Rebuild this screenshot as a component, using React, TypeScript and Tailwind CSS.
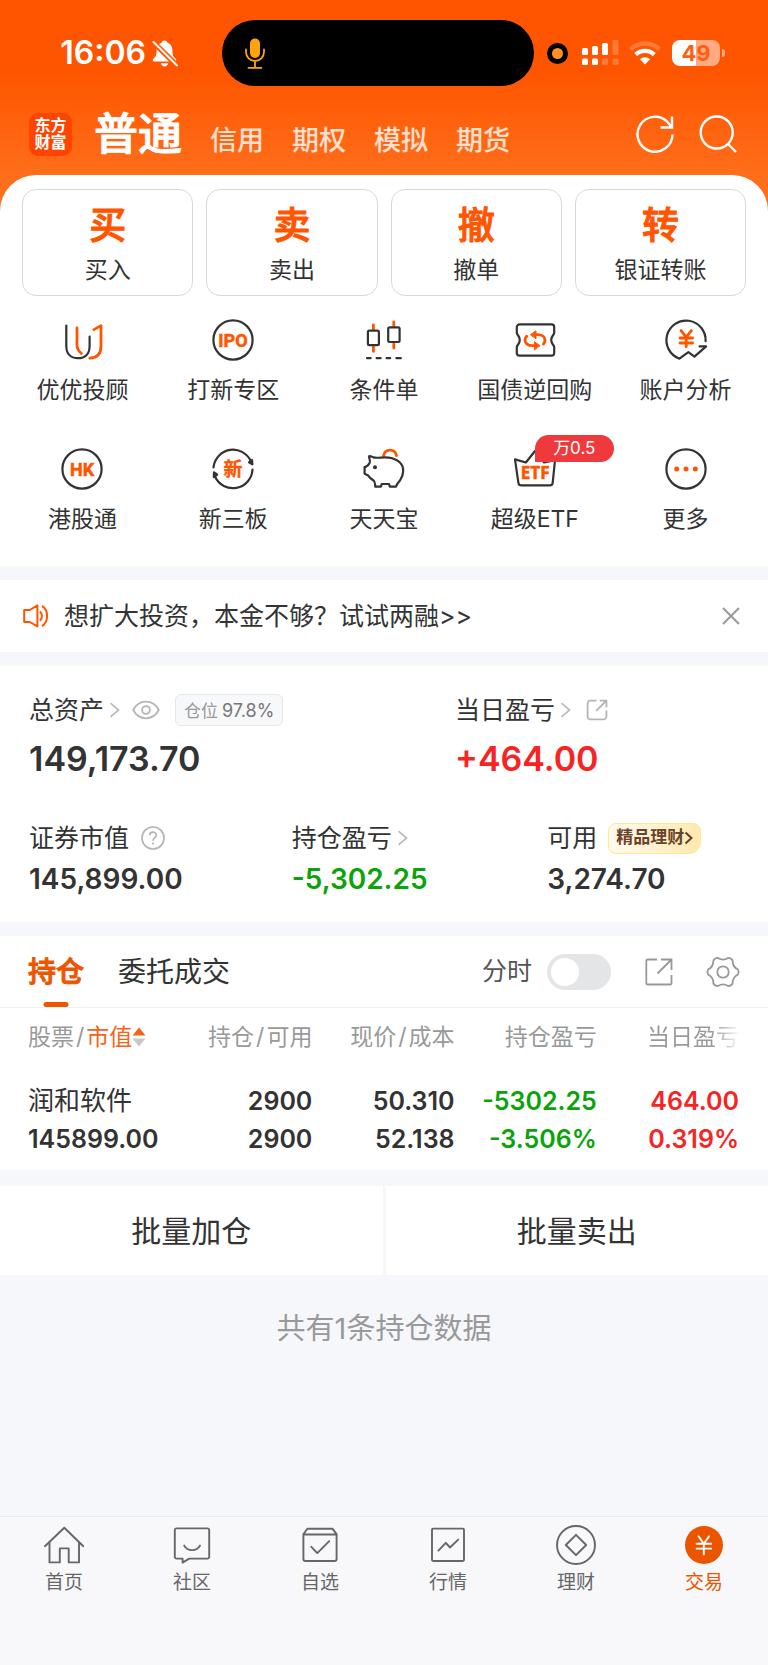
import type { ReactNode } from "react";

const accounts = ["信用", "期权", "模拟", "期货"];

const actions = [
  { mark: "买", label: "买入" },
  { mark: "卖", label: "卖出" },
  { mark: "撤", label: "撤单" },
  { mark: "转", label: "银证转账" },
];

const shortcuts = [
  { label: "优优投顾", icon: <AdvisorIcon /> },
  { label: "打新专区", icon: <RoundTextIcon text="IPO" /> },
  { label: "条件单", icon: <CandleIcon /> },
  { label: "国债逆回购", icon: <RepoIcon /> },
  { label: "账户分析", icon: <AnalysisIcon /> },
  { label: "港股通", icon: <RoundTextIcon text="HK" /> },
  { label: "新三板", icon: <NewBoardIcon /> },
  { label: "天天宝", icon: <PiggyIcon /> },
  { label: "超级ETF", icon: <EtfIcon />, badge: "万0.5" },
  { label: "更多", icon: <MoreIcon /> },
];

const holdings = [
  {
    name: "润和软件",
    value: "145899.00",
    cells: [
      { top: "2900", bottom: "2900", color: "text-[#333]" },
      { top: "50.310", bottom: "52.138", color: "text-[#333]" },
      { top: "-5302.25", bottom: "-3.506%", color: "text-[#0aa30a]" },
      { top: "464.00", bottom: "0.319%", color: "text-[#f72424]" },
    ],
  },
];

const tabs = [
  { label: "首页", icon: <HomeIcon /> },
  { label: "社区", icon: <CommunityIcon /> },
  { label: "自选", icon: <WatchlistIcon /> },
  { label: "行情", icon: <MarketIcon /> },
  { label: "理财", icon: <WealthIcon /> },
  { label: "交易", icon: <TradeIcon />, active: true },
];

/* ---------- shortcut icons ---------- */

function ShortcutSvg({ children }: { children: ReactNode }) {
  return (
    <svg
      viewBox="0 0 44 44"
      className="size-11"
      fill="none"
      stroke="#333"
      strokeWidth="2.2"
      strokeLinecap="round"
      strokeLinejoin="round"
      aria-hidden="true"
    >
      {children}
    </svg>
  );
}

function AdvisorIcon() {
  return (
    <ShortcutSvg>
      <path d="M6.3 7.5V28c0 8 4.5 12.2 11.6 12.2S29.6 36 29.6 28v-9.3" />
      <g stroke="#ff5500" strokeWidth="2.8">
        <path d="M17 9.8V27c0 4 1.4 6 4.3 8.4" />
        <path d="M33.8 11.6 41 7.6V28c0 7.6-4 12-11.2 12.2" />
      </g>
    </ShortcutSvg>
  );
}

function RoundTextIcon({ text }: { text: string }) {
  return (
    <ShortcutSvg>
      <circle cx="22" cy="22" r="19.6" />
      <text
        x="22"
        y="28.6"
        textAnchor="middle"
        fill="#ff5500"
        stroke="#ff5500"
        strokeWidth="0.5"
        className="font-['Roboto',sans-serif] text-[18px] font-bold"
      >
        {text}
      </text>
    </ShortcutSvg>
  );
}

function CandleIcon() {
  return (
    <ShortcutSvg>
      <g stroke="#ff5500" strokeWidth="2.8">
        <path d="M11.4 7v4M11.4 29v4.4M31.8 4v4M31.8 26v4" />
      </g>
      <rect x="5.9" y="12.6" width="11" height="14.6" rx="1.4" />
      <rect x="26.2" y="9.4" width="11.4" height="14.6" rx="1.4" />
      <path d="M5 40.2h3.6M14.6 40.2h4M24.6 40.2h3.6M34.4 40.2h4.4" />
    </ShortcutSvg>
  );
}

function RepoIcon() {
  return (
    <ShortcutSvg>
      <path d="M6.4 6.4h32.2a2.6 2.6 0 0 1 2.6 2.6v6.2c-.2 1.6-3 3-3 6.8s2.8 5.2 3 6.8V35a2.6 2.6 0 0 1-2.6 2.6H6.4A2.6 2.6 0 0 1 3.8 35v-6.2c.2-1.6 3-3 3-6.8s-2.8-5.2-3-6.8V9a2.6 2.6 0 0 1 2.6-2.6z" />
      <g stroke="#ff5500" strokeWidth="2.9">
        <path d="M22 16.6h2.500c4.500 0 7.500 2.400 7.500 5.600 0 1.600-.6 2.800-1.600 3.800M13.600 18.400c-1 1-1.600 2.200-1.600 3.600 0 3.200 3 5.600 7.500 5.600H22" />
      </g>
      <g fill="#ff5500" stroke="#ff5500" strokeWidth="1">
        <path d="M17.600 16.600l5.400-3.800v7.600zM26.800 27.600l-5.400-3.900v7.800z" />
      </g>
    </ShortcutSvg>
  );
}

function AnalysisIcon() {
  return (
    <ShortcutSvg>
      <path d="M41.600 23.200A19.600 19.600 0 1 0 15.400 40.600L24.400 34.200 30.400 38.600 42.200 28.400h-6.600" />
      <path
        d="M17 12.600l5.200 6.600 5.200-6.600M16 20h12.600M16 25h12.600M22.200 19.500v9.300"
        stroke="#ff5500"
        strokeWidth="2.800"
      />
    </ShortcutSvg>
  );
}

function NewBoardIcon() {
  return (
    <ShortcutSvg>
      <path d="M2.500 20.500A19.600 19.600 0 0 1 40 14.500M41.500 22.500A19.600 19.600 0 0 1 4 29.500" />
      <path d="M38 15.400l3-2.400.4 4.400zM2.800 30l.2-4.600 3.200 2.300z" fill="#333" />
      <text
        x="22"
        y="28.600"
        textAnchor="middle"
        fill="#ff5500"
        stroke="#ff5500"
        strokeWidth="0.300"
        className="font-['Noto_Sans_CJK_SC',sans-serif] text-[19px] font-bold"
      >
        新
      </text>
    </ShortcutSvg>
  );
}

function PiggyIcon() {
  return (
    <ShortcutSvg>
      <path d="M21.500 8.600c1-3.600 3.400-5.400 6.400-5.400 3.400 0 6 2 6.600 5.400" stroke="#ff5500" strokeWidth="2.800" />
      <path d="M7 9.200c1.600-.6 3 .6 4.400 1.200 3.400 1 7.600-.1 11.400-.1 10.600 0 18.400 5.200 18.400 13.400 0 4-1 6.600-3 9.400-1.600 2.200-3.400 3.800-4.200 6.500h-6.200l-.8-2.600h-7.200l-1 2.600h-5.600c-.2-3.400.4-4.600-2-6.400-2.200-1.400-3.800-2.600-5-4.600L2.600 26.800v-6.600c2.600-.4 3.600-1.800 5-4.200.8-1.600.6-2.200 0-3.600z" />
      <circle cx="13" cy="20.300" r="2" fill="#333" stroke="none" />
    </ShortcutSvg>
  );
}

function EtfIcon() {
  return (
    <ShortcutSvg>
      <path d="M2 12.400l10.900 3.100 9.100-11.500 9.100 11.500L42 13.200l-2.300 22.600a3 3 0 0 1-3 2.600H8.400a3 3 0 0 1-3-2.600z" />
      <text
        x="22.200"
        y="32.200"
        textAnchor="middle"
        fill="#ff5500"
        stroke="#ff5500"
        strokeWidth="0.600"
        className="font-['Open_Sans',sans-serif] text-[17px] font-bold"
      >
        ETF
      </text>
    </ShortcutSvg>
  );
}

function MoreIcon() {
  return (
    <ShortcutSvg>
      <circle cx="22" cy="22" r="19.600" />
      <g fill="#ff5500" stroke="none">
        <circle cx="12.700" cy="22" r="2.500" />
        <circle cx="22" cy="22" r="2.500" />
        <circle cx="31.300" cy="22" r="2.500" />
      </g>
    </ShortcutSvg>
  );
}

/* ---------- bottom bar icons ---------- */

function TabSvg({ children }: { children: ReactNode }) {
  return (
    <svg
      viewBox="0 0 40 40"
      className="size-10"
      fill="none"
      stroke="#666"
      strokeWidth="1.900"
      strokeLinecap="round"
      strokeLinejoin="round"
      aria-hidden="true"
    >
      {children}
    </svg>
  );
}

function HomeIcon() {
  return (
    <TabSvg>
      <path d="M.9 21.200L20.300 2.800 39.300 21.200M5.500 17v20.400h10.300V23.400h8.900v14h10.300V17" />
    </TabSvg>
  );
}

function CommunityIcon() {
  return (
    <TabSvg>
      <path d="M4.200 3.400h31.200a1.800 1.800 0 0 1 1.800 1.800v26.600a1.800 1.800 0 0 1-1.800 1.800H17.200l-6.600 4V33.600H4.600a1.800 1.800 0 0 1-1.800-1.800V5.200a1.800 1.800 0 0 1 1.400-1.800z" />
      <path d="M12.200 20.600c3.200 6 12.400 6 15.800 0" />
    </TabSvg>
  );
}

function WatchlistIcon() {
  return (
    <TabSvg>
      <path d="M3.400 9.200L7.400 3.700h25L36.600 9.200V34a2 2 0 0 1-2 2H5.400a2 2 0 0 1-2-2zM3.400 9.500h33.200" />
      <path d="M11.300 21.800l6 6.300L29.200 16.200" />
    </TabSvg>
  );
}

function MarketIcon() {
  return (
    <TabSvg>
      <rect x="4" y="3.600" width="32" height="32.400" rx="1.200" />
      <path d="M10.400 25.600l7.400-7.800 4.200 4.700 8.200-7.900" />
    </TabSvg>
  );
}

function WealthIcon() {
  return (
    <TabSvg>
      <circle cx="20" cy="20" r="19" />
      <path d="M20 9.800L30.200 20 20 30.200 9.800 20z" />
    </TabSvg>
  );
}

function TradeIcon() {
  return (
    <TabSvg>
      <circle cx="20" cy="20" r="19" fill="#ec5500" stroke="none" />
      <path d="M14.600 11.400l5.200 7.400 5.200-7.400M12.600 18.800h14.600M12.600 23.600h14.600M19.800 18.800v10.600" stroke="#fff" />
    </TabSvg>
  );
}

/* ---------- small icons ---------- */

function Chevron() {
  return (
    <svg viewBox="0 0 11 16" className="h-4 w-[11px]" fill="none" stroke="#bbb" strokeWidth="1.700" aria-hidden="true">
      <path d="M1.500 1.200L9.500 8l-8 6.800" />
    </svg>
  );
}

function StatusBar() {
  return (
    <div className="grid grid-cols-[222fr_312fr_234fr] items-center">
      <div className="flex items-center justify-end gap-1.5 pr-11 text-white">
        <span className="text-[32px] leading-10 font-semibold">16:06</span>
        <svg viewBox="0 0 26 27" className="h-[27px] w-[26px]" fill="#fff" aria-label="静音">
          <path d="M12.500.5c-1.500 0-2.600.9-3 2.200C6 4 4.600 7 4.600 10.500c0 5-1.200 6.500-3.400 8.600-.8.9-.6 2.400 1 2.400h20.600c1.600 0 1.800-1.500 1-2.400-2.200-2.100-3.400-3.600-3.400-8.600 0-3.500-1.400-6.500-4.900-7.800-.4-1.300-1.500-2.200-3-2.200zM8.800 23.200h7.400c-.5 2-1.900 3.200-3.700 3.200s-3.200-1.200-3.700-3.200z" />
          <path d="M1 2l24 23.500" stroke="#ff5600" strokeWidth="5.500" />
          <path d="M1.500 2l23.500 23.500" stroke="#fff" strokeWidth="2" strokeLinecap="round" />
        </svg>
      </div>
      <div className="flex h-[66px] items-center rounded-full bg-black pl-[23px]">
        <svg viewBox="0 0 20 31" className="h-[31px] w-5" fill="none" stroke="#ffa30f" strokeWidth="1.800" strokeLinecap="round" aria-label="麦克风使用中">
          <rect x="5" y=".5" width="10" height="19.500" rx="5" fill="#ffa30f" stroke="none" />
          <path d="M1 11.500v2.500a9 9 0 0 0 18 0v-2.500M10 23v6.500M3.500 29.800h13" />
        </svg>
      </div>
      <div className="flex items-center pl-[13px]">
        <span className="flex size-[21px] items-center justify-center rounded-full bg-black">
          <span className="size-[11px] rounded-full bg-[#ff8f27]" />
        </span>
        <svg viewBox="0 0 37 26" className="ml-[14px] h-[26px] w-[37px]" fill="#fff" aria-label="信号">
          <rect x="0" y="8" width="6" height="7" rx="1.500" />
          <rect x="10" y="6" width="6" height="9" rx="1.500" />
          <rect x="20" y="3" width="6" height="12" rx="1.500" />
          <rect x="30.500" y="0" width="6" height="15" rx="1.500" opacity=".22" />
          <rect x="0" y="18.500" width="6" height="6.500" rx="1.500" />
          <rect x="10" y="18.500" width="6" height="6.500" rx="1.500" />
          <rect x="20" y="18.500" width="6" height="6.500" rx="1.500" opacity=".22" />
          <rect x="30.500" y="18.500" width="6" height="6.500" rx="1.500" opacity=".22" />
        </svg>
        <svg viewBox="0 0 32 24" className="ml-[10px] h-6 w-8" fill="none" stroke="#fff" strokeWidth="4.300" aria-label="无线网络">
          <path d="M1.600 8.400a20.500 20.500 0 0 1 28.800 0" opacity=".22" />
          <path d="M6.700 13.600a13.300 13.300 0 0 1 18.600 0" />
          <path d="M16 23.600l-5.100-5.300a7.400 7.400 0 0 1 10.200 0z" fill="#fff" stroke="none" />
        </svg>
        <span className="ml-[11px] flex h-[26px] w-12 items-center justify-center rounded-lg bg-[linear-gradient(90deg,#fff_49%,#ffaa80_49%)] text-[22px] leading-[26px] font-bold text-[#ff5f10]">
          49
        </span>
        <span className="ml-0.5 h-2 w-[3px] rounded-r-full bg-white/50" />
      </div>
    </div>
  );
}

function Header() {
  return (
    <header className="pt-5">
      <StatusBar />
      <div className="flex items-center pt-5 pr-[31px] pb-[13px] pl-[29px]">
        <span className="flex size-[43px] flex-col items-center justify-center rounded-[9px] bg-[#ff4400] text-[16px] leading-[17px] font-bold text-white">
          <span>东方</span>
          <span>财富</span>
        </span>
        <nav className="ml-[22px] flex items-baseline gap-7">
          <a
            href="#normal"
            className="text-[44px] leading-[56px] font-medium text-white [-webkit-text-stroke:1px_#fff]"
          >
            普通
          </a>
          {accounts.map((name) => (
            <a key={name} href="#account" className="text-[27px] leading-8 font-medium text-white/80">
              {name}
            </a>
          ))}
        </nav>
        <div className="ml-auto flex items-center gap-[25px]">
          <button type="button" aria-label="刷新">
            <svg viewBox="0 0 38 38" className="size-[38px]" fill="none" stroke="#fff" strokeWidth="2.400">
              <path d="M36.500 19.500A17.500 17.500 0 1 1 31.800 7.300l3 3.700M36 1.500v11H24.500" />
            </svg>
          </button>
          <button type="button" aria-label="搜索">
            <svg viewBox="0 0 38 38" className="size-[38px]" fill="none" stroke="#fff" strokeWidth="2.400">
              <circle cx="17.700" cy="17.500" r="16" />
              <path d="M28.500 28.500l8.500 8.500" />
            </svg>
          </button>
        </div>
      </div>
    </header>
  );
}

function QuickPanel() {
  return (
    <section className="rounded-t-[36px] bg-white pt-[14px] pb-[33px]">
      <div className="grid grid-cols-4 gap-[13px] px-[22px]">
        {actions.map(({ mark, label }) => (
          <button
            key={label}
            type="button"
            className="flex flex-col items-center gap-2 rounded-[14px] border border-[#d9d9d9] pt-[14px] pb-[11px]"
          >
            <span className="text-[37px] leading-[44px] font-medium text-[#ff5500] [-webkit-text-stroke:1px_#ff5500]">
              {mark}
            </span>
            <span className="text-[23px] leading-7 text-[#333]">{label}</span>
          </button>
        ))}
      </div>
      <div className="mt-[22px] grid grid-cols-5 gap-y-[43px] px-[7px]">
        {shortcuts.map(({ label, icon, badge }) => (
          <a key={label} href="#shortcut" className="flex flex-col items-center gap-[14px]">
            <span className="relative">
              {icon}
              {badge && (
                <span className="absolute -top-3 left-[22px] w-[79px] rounded-full rounded-bl-none bg-[#ee3a3c] text-center text-[17px] leading-[27px] text-white">
                  {badge}
                </span>
              )}
            </span>
            <span className="text-[23px] leading-7 text-[#333]">{label}</span>
          </a>
        ))}
      </div>
    </section>
  );
}

function Notice() {
  return (
    <section className="flex items-center bg-white py-[22px] pr-7 pl-[23px]">
      <svg viewBox="0 0 26 24" className="h-6 w-[26px]" fill="none" stroke="#ff5500" strokeWidth="2" strokeLinejoin="round" aria-hidden="true">
        <path d="M1.200 6h5.600l7.600-4.600v21L6.800 18H1.200zM17 7.400c2.600 2.400 2.600 7 0 9.400M19 1.800c6.800 4.400 6.800 16 0 20.400" />
      </svg>
      <a href="#margin" className="ml-[15px] text-[25px] leading-7 text-[#333]">
        想扩大投资，本金不够？试试两融&gt;&gt;
      </a>
      <button type="button" aria-label="关闭" className="ml-auto">
        <svg viewBox="0 0 18 18" className="size-[18px]" fill="none" stroke="#999" strokeWidth="2">
          <path d="M1 1l16 16M17 1L1 17" />
        </svg>
      </button>
    </section>
  );
}

function Assets() {
  return (
    <section className="bg-white px-[29px] pt-7 pb-[25px] text-[#333]">
      <div className="grid grid-cols-[60%_1fr]">
        <div>
          <div className="flex items-center">
            <span className="text-[25px] leading-8">总资产</span>
            <span className="ml-[5px]">
              <Chevron />
            </span>
            <button type="button" aria-label="隐藏金额" className="ml-3">
              <svg viewBox="0 0 28 20" className="h-5 w-7" fill="none" stroke="#b5b5b5" strokeWidth="1.800">
                <path d="M1.200 10C4 4.700 8.500 1.700 14 1.700S24 4.700 26.800 10C24 15.300 19.500 18.300 14 18.300S4 15.300 1.200 10z" />
                <circle cx="14" cy="10" r="3.900" />
              </svg>
            </button>
            <span className="ml-[15px] flex h-8 items-baseline gap-1 rounded-md border border-[#e6e7ea] bg-[#f7f8fa] px-2 leading-[31px] text-[#999]">
              <span className="text-[17px]">仓位</span>
              <span className="text-[18px] text-[#777]">97.8%</span>
            </span>
          </div>
          <p className="mt-[13px] text-[34px] leading-10 font-semibold">149,173.70</p>
        </div>
        <div>
          <div className="flex items-center">
            <span className="text-[25px] leading-8">当日盈亏</span>
            <span className="ml-[5px]">
              <Chevron />
            </span>
            <button type="button" aria-label="分享盈亏" className="ml-[15px]">
              <svg viewBox="0 0 22 22" className="size-[22px]" fill="none" stroke="#b5b5b5" strokeWidth="1.800">
                <path d="M10.500 1.600H4.600a3 3 0 0 0-3 3v12.800a3 3 0 0 0 3 3h12.800a3 3 0 0 0 3-3v-5.800M13.800 1.600h6.600v6.600M20 2l-9.800 9.800" />
              </svg>
            </button>
          </div>
          <p className="mt-[13px] text-[34px] leading-10 font-semibold text-[#f72424]">+464.00</p>
        </div>
      </div>

      <div className="mt-[43px] grid grid-cols-[37%_36%_1fr]">
        <div>
          <div className="flex items-center">
            <span className="text-[25px] leading-8">证券市值</span>
            <button type="button" aria-label="说明" className="ml-3">
              <svg viewBox="0 0 24 24" className="size-6" fill="none" stroke="#b5b5b5" strokeWidth="1.700">
                <circle cx="12" cy="12" r="11" />
                <path d="M8.700 9.300c0-4.300 6.600-4.300 6.600-.2 0 2.600-3.300 2.600-3.300 5.600M12 16.400v2" />
              </svg>
            </button>
          </div>
          <p className="mt-[7px] text-[28px] leading-9 font-semibold">145,899.00</p>
        </div>
        <div>
          <div className="flex items-center">
            <span className="text-[25px] leading-8">持仓盈亏</span>
            <span className="ml-[5px]">
              <Chevron />
            </span>
          </div>
          <p className="mt-[7px] text-[28px] leading-9 font-semibold text-[#0aa30a]">-5,302.25</p>
        </div>
        <div>
          <div className="flex items-center">
            <span className="text-[25px] leading-8">可用</span>
            <a
              href="#wealth"
              className="ml-[11px] flex h-[31px] items-center rounded-lg rounded-br-xl border border-[#ffe88f] bg-linear-to-r from-[#fffaf0] to-[#ffe9ae] px-[7px] text-[17px] font-bold text-[#6b4329]"
            >
              精品理财
              <svg viewBox="0 0 9 14" className="h-[14px] w-[9px]" fill="none" stroke="#6b4329" strokeWidth="2.200" aria-hidden="true">
                <path d="M1.500 1.500L7.500 7l-6 5.500" />
              </svg>
            </a>
          </div>
          <p className="mt-[7px] text-[28px] leading-9 font-semibold">3,274.70</p>
        </div>
      </div>
    </section>
  );
}

function Slash() {
  return <span className="mx-0.5">/</span>;
}

function Holdings() {
  return (
    <section className="bg-white text-[#333]">
      <div className="flex h-[72px] items-center border-b border-[#eff0f3] px-7">
        <button
          type="button"
          className="relative h-full text-[28px] font-medium text-[#ee5500] [-webkit-text-stroke:1px_#ee5500]"
        >
          持仓
          <span className="absolute bottom-0 left-1/2 h-[5px] w-[25px] -translate-x-1/2 rounded-sm bg-[#ee5500]" />
        </button>
        <button type="button" className="ml-[34px] h-full text-[28px]">
          委托成交
        </button>
        <label htmlFor="intraday" className="ml-auto text-[25px] text-[#555]">
          分时
        </label>
        <input
          id="intraday"
          type="checkbox"
          role="switch"
          className="ml-[15px] h-9 w-16 appearance-none rounded-full bg-[#e4e5e7] p-1 before:block before:size-7 before:rounded-full before:bg-white checked:bg-[#ee5500] checked:before:ml-auto"
        />
        <button type="button" aria-label="分享持仓" className="ml-[34px]">
          <svg viewBox="0 0 28 28" className="size-7" fill="none" stroke="#999" strokeWidth="1.800">
            <path d="M12 1.500H2.500A1.200 1.200 0 0 0 1.300 2.700v22.600a1.200 1.200 0 0 0 1.200 1.200h22.800a1.200 1.200 0 0 0 1.200-1.200V17M16 1.500h10.500V12M26 2L12.500 15.500" />
          </svg>
        </button>
        <button type="button" aria-label="设置" className="ml-[33px]">
          <svg viewBox="-17 -17 34 34" className="size-[34px]" fill="none" stroke="#999" strokeWidth="1.800" strokeLinejoin="round">
            <path d="M14.770-2.600Q16.300 0 14.770 2.600 9.350 5.400 9.640 11.490 8.150 14.100 5.130 14.100 0 10.800-5.130 14.100-8.150 14.100-9.640 11.490-9.350 5.400-14.770 2.600-16.300 0-14.770-2.600-9.350-5.400-9.640-11.490-8.150-14.100-5.130-14.100 0-10.800 5.130-14.100 8.150-14.100 9.640-11.490 9.350-5.400 14.770-2.600z" />
            <circle r="5.700" />
          </svg>
        </button>
      </div>

      <div className="pr-[29px] pl-7">
        <table className="w-full table-fixed text-right whitespace-nowrap">
          <thead className="text-[23px] leading-[58px] text-[#999]">
            <tr>
              <th className="text-left font-normal">
                <button type="button" className="flex items-center">
                  股票
                  <Slash />
                  <span className="text-[#f56416]">市值</span>
                  <svg viewBox="0 0 14 20" className="h-5 w-[14px]" aria-hidden="true">
                    <path d="M7 .5l6.500 8H.5z" fill="#f56416" />
                    <path d="M7 19.500l6.500-8H.5z" fill="#c8c8c8" />
                  </svg>
                </button>
              </th>
              <th className="font-normal">
                持仓
                <Slash />
                可用
              </th>
              <th className="font-normal">
                现价
                <Slash />
                成本
              </th>
              <th className="font-normal">持仓盈亏</th>
              <th className="font-normal">
                <span className="bg-linear-to-r from-[#999] from-70% to-[#99999910] bg-clip-text text-transparent">
                  当日盈亏
                </span>
              </th>
            </tr>
          </thead>
          <tbody className="text-[25px] leading-[38px] font-semibold">
            {holdings.map((stock) => (
              <tr key={stock.name}>
                <td className="pt-4 pb-3 text-left">
                  <div className="text-[26px] font-normal">{stock.name}</div>
                  <div>{stock.value}</div>
                </td>
                {stock.cells.map((cell) => (
                  <td key={cell.top} className={`pt-4 pb-3 ${cell.color}`}>
                    <div>{cell.top}</div>
                    <div>{cell.bottom}</div>
                  </td>
                ))}
              </tr>
            ))}
          </tbody>
        </table>
      </div>
    </section>
  );
}

function TabBar() {
  return (
    <nav className="mt-auto grid grid-cols-6 border-t border-[#e9eaed] bg-[#f8f8fb] pt-2 pb-[69px]">
      {tabs.map(({ label, icon, active }) => (
        <a
          key={label}
          href="#tab"
          className={`flex flex-col items-center gap-[5px] text-[19px] leading-[26px] ${active ? "text-[#ee5500]" : "text-[#666]"}`}
        >
          {icon}
          {label}
        </a>
      ))}
    </nav>
  );
}

export default function App() {
  return (
    <div className="flex min-h-screen flex-col bg-[#f6f7fa] font-['Inter','Noto_Sans_CJK_SC',sans-serif]">
      <div className="bg-[linear-gradient(#ff5500_70px,#ff6e1a_175px)]">
        <Header />
        <QuickPanel />
      </div>
      <main className="mt-[14px] flex flex-col gap-[14px]">
        <Notice />
        <Assets />
        <Holdings />
        <div className="mt-0.5 grid grid-cols-2 gap-[3px] text-[30px] text-[#333]">
          <button type="button" className="bg-white pt-6 pb-[23px] leading-[42px]">
            批量加仓
          </button>
          <button type="button" className="bg-white pt-6 pb-[23px] leading-[42px]">
            批量卖出
          </button>
        </div>
        <p className="mt-5 text-center text-[29px] leading-10 text-[#999]">共有1条持仓数据</p>
      </main>
      <TabBar />
    </div>
  );
}
